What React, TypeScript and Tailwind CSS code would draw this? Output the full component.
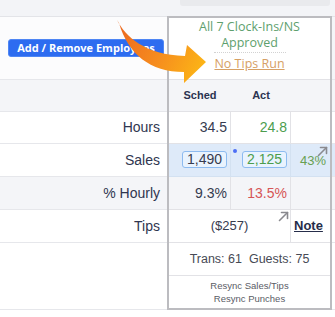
const Diag = () => (
  <svg width="11" height="11" viewBox="0 0 11 11" fill="none" stroke="#8a8a8f" strokeWidth="1.6" strokeLinecap="round" strokeLinejoin="round">
    <line x1="1.5" y1="9.5" x2="9.5" y2="1.5" />
    <polyline points="3.5,1.5 9.5,1.5 9.5,7.5" />
  </svg>
)

export default function App() {
  return (
    <div className="relative w-[335px] h-[317px] overflow-hidden bg-white font-['Liberation_Sans',Arial,sans-serif]">
      {/* top strip */}
      <div className="h-[16px] bg-[#f3f4f7]">
        <div className="ml-[180px] h-[6px] w-[150px] rounded-b-[3px] bg-[#e9eaed]" />
      </div>

      <div className="flex">
        {/* labels */}
        <div className="w-[167px] border-t border-[#e3e4e8] text-[14px] text-[#2f3650]">
          <div className="flex h-[63px] items-center border-b border-[#e6e7eb] bg-[#fcfcfd] pl-[8px]">
            <button className="flex h-[18px] w-[156px] items-center justify-center rounded-[3px] border border-[#4f86f4] bg-[#2d6cf0] font-['Open_Sans',sans-serif] text-[11px] font-bold text-white">
              Add / Remove Employees
            </button>
          </div>
          <div className="h-[32px] border-b border-[#e6e7eb] bg-[#f4f5f8]" />
          <div className="flex h-[32px] items-center justify-end border-b border-[#e6e7eb] bg-white pr-[7px]">Hours</div>
          <div className="flex h-[33px] items-center justify-end border-b border-[#e6e7eb] bg-white pr-[7px]">Sales</div>
          <div className="flex h-[33px] items-center justify-end border-b border-[#e6e7eb] bg-[#f4f5f8] pr-[7px]">% Hourly</div>
          <div className="flex h-[33px] items-center justify-end border-b border-[#e6e7eb] bg-white pr-[7px]">Tips</div>
          <div className="h-[67px] border-b border-[#e6e7eb] bg-white" />
        </div>

        {/* day panel */}
        <div className="w-[165px] border-2 border-[#bcbcc0] text-[14px] text-[#363b4f]">
          <div className="flex h-[62px] flex-col items-center border-b border-[#e2e2e6] bg-white pt-[1px] font-['Open_Sans',sans-serif] text-[12.5px] font-medium leading-[16px]">
            <div className="text-[#5e9f6e]">All 7 Clock-Ins/NS</div>
            <div className="text-[#5e9f6e]">Approved</div>
            <div className="mt-[1px] w-[72px] border-t border-dotted border-[#d2d2d2]" />
            <div className="mt-[3px] text-[#d6a065] underline">No Tips Run</div>
          </div>
          <div className="flex h-[32px] border-b border-[#e2e2e6] bg-[#f4f5f8] text-[11px] font-bold text-[#2b3350]">
            <div className="flex w-[62px] items-center justify-center">Sched</div>
            <div className="flex w-[60px] items-center justify-center">Act</div>
          </div>
          <div className="flex h-[32px] border-b border-[#e2e2e6] bg-white">
            <div className="flex w-[62px] items-center justify-end border-r border-[#e2e2e6] pr-[3px]">34.5</div>
            <div className="flex w-[60px] items-center justify-end border-r border-[#e2e2e6] pr-[3px] text-[#4c9d4e]">24.8</div>
            <div className="flex-1" />
          </div>
          <div className="flex h-[33px] border-b border-[#d3e1f1] bg-[#deeaf9]">
            <div className="flex w-[62px] items-center justify-end border-r border-[#d3e1f1] pr-[3px]">
              <span className="mb-[2px] rounded-[3px] border border-[#8dbbf0] bg-[#e9f3fe] px-[4px] leading-[15px]">1,490</span>
            </div>
            <div className="relative flex w-[60px] items-center justify-end border-r border-[#d3e1f1] pr-[3px] text-[#4c9d4e]">
              <span className="absolute left-[2px] top-[5px] h-[4px] w-[4px] rounded-full bg-[#4d6ef5]" />
              <span className="mb-[2px] rounded-[3px] border border-[#8dbbf0] bg-[#e9f3fe] px-[4px] leading-[15px]">2,125</span>
            </div>
            <div className="relative flex flex-1 items-center pl-[9px] pt-[2px] text-[13px] text-[#67a052]">
              43%
              <span className="absolute left-[26px] top-[2px]"><Diag /></span>
            </div>
          </div>
          <div className="flex h-[33px] border-b border-[#e2e2e6] bg-[#f4f5f8]">
            <div className="flex w-[62px] items-center justify-end border-r border-[#e2e2e6] pr-[3px]">9.3%</div>
            <div className="flex w-[60px] items-center justify-end border-r border-[#e2e2e6] pr-[3px] text-[#d65656]">13.5%</div>
            <div className="flex-1" />
          </div>
          <div className="flex h-[33px] border-b border-[#e2e2e6] bg-white">
            <div className="relative flex w-[122px] items-center justify-center border-r border-[#e2e2e6] text-[13px]">
              ($257)
              <span className="absolute right-[1px] top-[1px]"><Diag /></span>
            </div>
            <div className="flex flex-1 items-center pl-[3px] text-[13px] font-bold text-[#262d4a] underline">Note</div>
          </div>
          <div className="flex h-[33px] items-center justify-center border-b border-[#e2e2e6] bg-white text-[12.5px] text-[#474a55]">
            Trans: 61&nbsp;&nbsp;Guests: 75
          </div>
          <div className="flex h-[32px] flex-col items-center justify-center bg-white text-[9.5px] leading-[13px] text-[#5a5c66]">
            <div>Resync Sales/Tips</div>
            <div>Resync Punches</div>
          </div>
        </div>

        {/* next column sliver */}
        <div className="flex-1 border-t border-[#e3e4e8]">
          <div className="h-[63px] border-b border-[#e6e7eb] bg-[#f4f5f8]" />
          <div className="h-[32px] border-b border-[#e6e7eb] bg-[#f4f5f8]" />
          <div className="h-[32px] border-b border-[#e6e7eb] bg-white" />
          <div className="h-[33px] border-b border-[#e6e7eb] bg-[#deeaf9]" />
          <div className="h-[33px] border-b border-[#e6e7eb] bg-[#f4f5f8]" />
          <div className="h-[33px] border-b border-[#e6e7eb] bg-white" />
          <div className="h-[67px] border-b border-[#e6e7eb] bg-white" />
        </div>
      </div>

      {/* callout arrow */}
      <svg className="pointer-events-none absolute left-0 top-0" width="335" height="317">
        <defs>
          <linearGradient id="arrowGrad" x1="117" y1="20" x2="206" y2="61" gradientUnits="userSpaceOnUse">
            <stop offset="0" stopColor="#ec661f" />
            <stop offset="0.55" stopColor="#f68d1e" />
            <stop offset="1" stopColor="#fcb416" />
          </linearGradient>
        </defs>
        <path
          d="M117,20 C125,36 145,55 185,56 L187,45 L206,62 L184,83 L184,72 C150,72 128,54 119,23 Z"
          fill="url(#arrowGrad)"
        />
      </svg>
    </div>
  )
}
